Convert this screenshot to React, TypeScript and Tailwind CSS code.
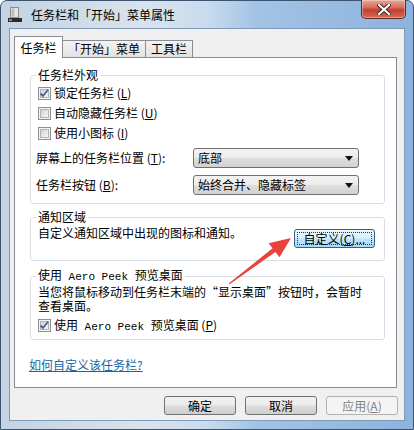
import React from "react";

const Key = ({ k }: { k: string }) => (
  <span>
    {" "}(<u>{k}</u>)
  </span>
);

const Mono = ({ children }: { children: React.ReactNode }) => (
  <span className="font-['Liberation_Mono',monospace] text-[11px]">{children}</span>
);

const Check = ({ checked }: { checked?: boolean }) => (
  <span className="flex h-[13px] w-[13px] shrink-0 items-center justify-center border border-[#8e8f8f] bg-[#f4f4f4]">
    <span className="flex h-[9px] w-[9px] items-center justify-center border border-[#aeb3b9] bg-[linear-gradient(135deg,#cfd3d8,#f6f6f6)]">
      {checked && (
        <svg width="9" height="9" viewBox="0 0 9 9" className="overflow-visible">
          <path d="M0.5 4.5 L3 7 L8 0.8" fill="none" stroke="#4a5f8a" strokeWidth="1.8" />
        </svg>
      )}
    </span>
  </span>
);

const Combo = ({ value }: { value: string }) => (
  <div className="flex h-[20px] w-[166px] items-center justify-between rounded-[3px] border border-[#707070] bg-[linear-gradient(#f3f3f3_0%,#ececec_48%,#dedede_52%,#d2d2d2_100%)] pl-[4px] pr-[5px]">
    <span>{value}</span>
    <svg width="8" height="5" viewBox="0 0 8 5">
      <path d="M0 0 H8 L4 5 Z" fill="#111" />
    </svg>
  </div>
);

const Btn = ({
  children,
  disabled,
}: {
  children: React.ReactNode;
  disabled?: boolean;
}) => (
  <div
    className={
      disabled
        ? "flex h-[19px] w-[72px] items-center justify-center rounded-[3px] border border-[#adb2b5] bg-[#f4f4f4] text-[#838383]"
        : "flex h-[19px] w-[72px] items-center justify-center rounded-[3px] border border-[#707070] bg-[linear-gradient(#f2f2f2_0%,#ebebeb_48%,#dddddd_52%,#cfcfcf_100%)]"
    }
  >
    {children}
  </div>
);

const Group = ({
  title,
  className,
  children,
}: {
  title: React.ReactNode;
  className?: string;
  children: React.ReactNode;
}) => (
  <fieldset className={"rounded-[3px] border border-[#d5dfe5] " + (className ?? "")}>
    <legend className="ml-[5px] px-[2px] leading-[16px]">{title}</legend>
    {children}
  </fieldset>
);

export default function App() {
  return (
    <div className="h-[430px] w-[414px] overflow-hidden bg-white font-['Noto_Sans_CJK_SC',sans-serif] text-[12px] leading-[16px] text-black">
      <div className="relative flex h-full flex-col rounded-t-[7px] border border-[#3d5470] bg-[linear-gradient(90deg,#c3d3e2_0%,#d9e3ed_35%,#c9dbee_50%,#a3c3e5_62%,#8cb3dc_100%)]">
        {/* title bar */}
        <div className="flex h-[27px] shrink-0 items-start justify-between">
          <div className="flex h-full items-center pl-[7px]">
            <svg width="14" height="15" viewBox="0 0 14 15">
              <rect x="2.5" y="0.5" width="8" height="10" fill="#e6e6e6" stroke="#8a8a8a" />
              <rect x="3.5" y="1.5" width="3" height="8" fill="#bdbdbd" />
              <rect x="0" y="11" width="14" height="4" fill="#2b2b2b" />
              <rect x="1" y="12" width="3" height="2" fill="#6a8fb0" />
            </svg>
            <span className="ml-[9px] text-[12px]">任务栏和「开始」菜单属性</span>
          </div>
          <div className="mr-[7px] -mt-px flex h-[19px] w-[45px] items-center justify-center rounded-b-[5px] border border-t-0 border-[#5a2a25] bg-[linear-gradient(#e8a597_0%,#d8705f_40%,#c2412f_55%,#d66a55_100%)] shadow-[inset_0_0_0_1px_rgba(255,255,255,0.35)]">
            <svg width="14" height="11" viewBox="0 0 14 11">
              <path
                d="M2 1 L12 10 M12 1 L2 10"
                stroke="#4a1c16"
                strokeWidth="4"
                strokeLinecap="square"
              />
              <path
                d="M2 1 L12 10 M12 1 L2 10"
                stroke="#ffffff"
                strokeWidth="2.2"
                strokeLinecap="square"
              />
            </svg>
          </div>
        </div>

        {/* client area */}
        <div className="mx-[8px] mb-[8px] flex flex-1 flex-col border border-[#7f99b8] bg-[#f0f0f0] pl-[4px] pr-[7px]">
          {/* tabs */}
          <div className="flex items-end pt-[7px]">
            <div className="relative z-10 -mb-px flex h-[22px] w-[49px] items-start justify-center border border-b-0 border-[#898c95] bg-white pt-[3px]">
              任务栏
            </div>
            <div className="flex h-[17px] w-[83px] items-center justify-center border border-b-0 border-l-0 border-[#898c95] bg-[linear-gradient(#f3f3f3,#e3e3e3)]">
              「开始」菜单
            </div>
            <div className="flex h-[17px] w-[47px] items-center justify-center border border-b-0 border-l-0 border-[#898c95] bg-[linear-gradient(#f3f3f3,#e3e3e3)]">
              工具栏
            </div>
          </div>

          {/* tab panel */}
          <div className="flex h-[331px] flex-col border border-[#898c95] bg-white pl-[15px] pr-[11px] pt-[9px]">
            <Group title="任务栏外观">
              <div className="flex flex-col pb-[8px] pl-[7px]">
                <label className="flex h-[20px] items-center gap-[3px]">
                  <Check checked />
                  <span>
                    锁定任务栏<Key k="L" />
                  </span>
                </label>
                <label className="flex h-[20px] items-center gap-[3px]">
                  <Check />
                  <span>
                    自动隐藏任务栏<Key k="U" />
                  </span>
                </label>
                <label className="flex h-[20px] items-center gap-[3px]">
                  <Check />
                  <span>
                    使用小图标<Key k="I" />
                  </span>
                </label>
                <div className="mt-[5px] flex items-center">
                  <span className="-ml-[2px] w-[157px]">
                    屏幕上的任务栏位置<Key k="T" />:
                  </span>
                  <Combo value="底部" />
                </div>
                <div className="mt-[7px] flex items-center">
                  <span className="-ml-[2px] w-[157px]">
                    任务栏按钮<Key k="B" />:
                  </span>
                  <Combo value="始终合并、隐藏标签" />
                </div>
              </div>
            </Group>

            <Group title="通知区域" className="mt-[5px]">
              <div className="flex items-start justify-between pb-[12px] pl-[7px] pr-[9px]">
                <span>自定义通知区域中出现的图标和通知。</span>
                <div className="mt-[4px] flex h-[19px] w-[81px] items-center justify-center rounded-[3px] border border-[#2c628b] bg-[linear-gradient(#eaf6fd_0%,#d9f0fc_48%,#bee6fd_52%,#a7d9f5_100%)] p-[2px]">
                  <span className="flex h-full w-full items-center justify-center border border-dotted border-[#333]">
                    自定义<Key k="C" />...
                  </span>
                </div>
              </div>
            </Group>

            <Group
              className="mt-[6px]"
              title={
                <span>
                  使用<Mono> Aero Peek </Mono>预览桌面
                </span>
              }
            >
              <div className="flex flex-col pb-[6px] pl-[7px]">
                <p className="leading-[14px]">
                  当您将鼠标移动到任务栏末端的“显示桌面”按钮时，会暂时
                  <br />
                  查看桌面。
                </p>
                <label className="mt-[5px] flex h-[15px] items-center gap-[3px]">
                  <Check checked />
                  <span>
                    使用<Mono> Aero Peek </Mono>预览桌面<Key k="P" />
                  </span>
                </label>
              </div>
            </Group>

            <a className="-ml-px mt-[17px] self-start text-[#1467a8] underline">
              如何自定义该任务栏?
            </a>
          </div>

          {/* buttons */}
          <div className="-mr-px mt-[8px] flex justify-end gap-[9px]">
            <Btn>确定</Btn>
            <Btn>取消</Btn>
            <Btn disabled>
              应用<Key k="A" />
            </Btn>
          </div>
        </div>

        {/* red annotation arrow */}
        <svg
          className="pointer-events-none absolute left-[-1px] top-[-1px]"
          width="414"
          height="430"
          viewBox="0 0 414 430"
        >
          <polygon
            points="229.3,284.4 275.4,251.9 279.5,257.2 291,238 268.6,243.3 272.6,248.3 228.7,283.6"
            fill="#e8433b"
          />
        </svg>
      </div>
    </div>
  );
}
